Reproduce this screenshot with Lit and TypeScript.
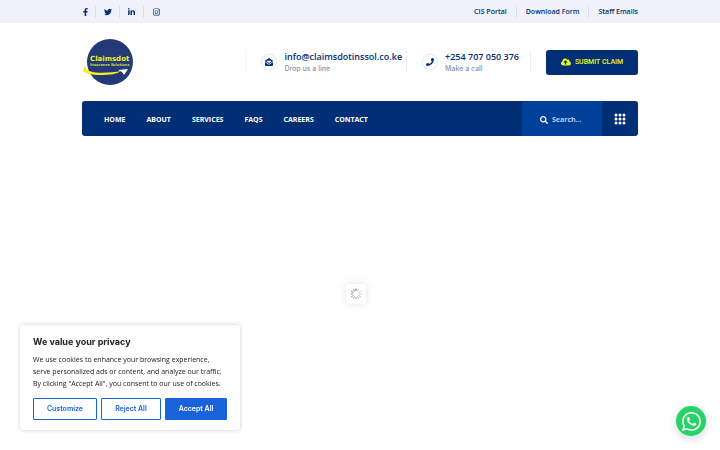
import { LitElement, html, svg, css } from "lit";
import { customElement } from "lit/decorators.js";

const icon = (box: string, path: string, cls = "") =>
  html`<svg class="icon ${cls}" viewBox=${box} aria-hidden="true">${svg`<path fill="currentColor" d=${path} />`}</svg>`;

const SOCIALS = [
  { name: "Facebook", box: "0 0 320 512", d: "M279.14 288l14.22-92.66h-88.91v-60.13c0-25.35 12.42-50.06 52.24-50.06h40.42V6.26S260.43 0 225.36 0c-73.22 0-121.08 44.38-121.08 124.72v70.62H22.89V288h81.39v224h100.17V288z" },
  { name: "Twitter", box: "0 0 512 512", d: "M459.37 151.716c.325 4.548.325 9.097.325 13.645 0 138.72-105.583 298.558-298.558 298.558-59.452 0-114.68-17.219-161.137-47.106 8.447.974 16.568 1.299 25.34 1.299 49.055 0 94.213-16.568 130.274-44.832-46.132-.975-84.792-31.188-98.112-72.772 6.498.974 12.995 1.624 19.818 1.624 9.421 0 18.843-1.3 27.614-3.573-48.081-9.747-84.143-51.98-84.143-102.985v-1.299c13.969 7.797 30.214 12.67 47.431 13.319-28.264-18.843-46.781-51.005-46.781-87.391 0-19.492 5.197-37.36 14.294-52.954 51.655 63.675 129.3 105.258 216.365 109.807-1.624-7.797-2.599-15.918-2.599-24.04 0-57.828 46.782-104.934 104.934-104.934 30.213 0 57.502 12.67 76.67 33.137 23.715-4.548 46.456-13.32 66.599-25.34-7.798 24.366-24.366 44.833-46.132 57.827 21.117-2.273 41.584-8.122 60.426-16.243-14.292 20.791-32.161 39.308-52.628 54.253z" },
  { name: "LinkedIn", box: "0 0 448 512", d: "M100.28 448H7.4V148.9h92.88zM53.79 108.1C24.09 108.1 0 83.5 0 53.8a53.79 53.79 0 0 1 107.58 0c0 29.7-24.1 54.3-53.79 54.3zM447.9 448h-92.68V302.4c0-34.7-.7-79.2-48.29-79.2-48.29 0-55.69 37.7-55.69 76.7V448h-92.78V148.9h89.08v40.8h1.3c12.4-23.5 42.69-48.3 87.88-48.3 94 0 111.28 61.9 111.28 142.3V448z" },
  { name: "Instagram", box: "0 0 448 512", d: "M224.1 141c-63.6 0-114.9 51.3-114.9 114.9s51.3 114.9 114.9 114.9S339 319.5 339 255.9 287.7 141 224.1 141zm0 189.6c-41.1 0-74.7-33.5-74.7-74.7s33.5-74.7 74.7-74.7 74.7 33.5 74.7 74.7-33.6 74.7-74.7 74.7zm146.4-194.3c0 14.9-12 26.8-26.8 26.8-14.9 0-26.8-12-26.8-26.8s12-26.8 26.8-26.8 26.8 12 26.8 26.8zm76.1 27.2c-1.7-35.9-9.9-67.7-36.2-93.9-26.2-26.2-58-34.4-93.9-36.2-37-2.1-147.9-2.1-184.9 0-35.8 1.7-67.6 9.9-93.9 36.1s-34.4 58-36.2 93.9c-2.1 37-2.1 147.9 0 184.9 1.7 35.9 9.9 67.7 36.2 93.9s58 34.4 93.9 36.2c37 2.1 147.9 2.1 184.9 0 35.9-1.7 67.7-9.9 93.9-36.2 26.2-26.2 34.4-58 36.2-93.9 2.1-37 2.1-147.8 0-184.8zM398.8 388c-7.8 19.6-22.9 34.7-42.6 42.6-29.5 11.7-99.5 9-132.1 9s-102.7 2.6-132.1-9c-19.6-7.8-34.7-22.9-42.6-42.6-11.7-29.5-9-99.5-9-132.1s-2.6-102.7 9-132.1c7.8-19.6 22.9-34.7 42.6-42.6 29.5-11.7 99.5-9 132.1-9s102.7-2.6 132.1 9c19.6 7.8 34.7 22.9 42.6 42.6 11.7 29.5 9 99.5 9 132.1s2.7 102.7-9 132.1z" },
];
const PHONE = "M493.4 24.6l-104-24c-11.3-2.6-22.9 3.3-27.5 13.9l-48 112c-4.2 9.8-1.4 21.3 6.9 28l60.6 49.6c-36 76.7-98.9 140.5-177.2 177.2l-49.6-60.6c-6.8-8.3-18.2-11.1-28-6.9l-112 48C3.9 366.5-2 378.1.6 389.4l24 104C27.1 504.2 36.7 512 48 512c256.1 0 464-207.5 464-464 0-11.2-7.7-20.9-18.6-23.4z";
const MAIL = "M256 0Q280 0 310 26L490 166Q512 184 512 204L310 356Q256 392 202 356L0 204Q0 184 22 166L202 26Q232 0 256 0ZM120 170V226L256 322L392 226V170ZM0 250L190 392Q256 434 322 392L512 250V464Q512 512 464 512H48Q0 512 0 464Z";
const SEARCH = "M505 442.7L405.3 343c-4.5-4.5-10.6-7-17-7H372c27.6-35.3 44-79.7 44-128C416 93.1 322.9 0 208 0S0 93.1 0 208s93.1 208 208 208c48.3 0 92.7-16.4 128-44v16.3c0 6.4 2.5 12.5 7 17l99.7 99.7c9.4 9.4 24.6 9.4 33.9 0l28.3-28.3c9.4-9.4 9.4-24.6.1-34zM208 336c-70.7 0-128-57.2-128-128 0-70.7 57.2-128 128-128 70.7 0 128 57.2 128 128 0 70.7-57.2 128-128 128z";
const CLOUD = "M537.6 226.6c4.1-10.7 6.4-22.4 6.4-34.6 0-53-43-96-96-96-19.7 0-38.1 6-53.3 16.2C367 64.2 315.3 32 256 32c-88.4 0-160 71.6-160 160 0 2.7.1 5.4.2 8.1C40.2 219.8 0 273.2 0 336c0 79.5 64.5 144 144 144h368c70.7 0 128-57.3 128-128 0-61.9-44-113.6-102.4-125.4zM393.4 288H328v112c0 8.8-7.2 16-16 16h-48c-8.8 0-16-7.2-16-16V288h-65.4c-14.3 0-21.4-17.2-11.3-27.3l105.4-105.4c6.2-6.2 16.4-6.2 22.6 0l105.4 105.4c10.1 10.1 2.9 27.3-11.3 27.3z";
const WHATSAPP = "M380.9 97.1C339 55.1 283.2 32 223.9 32c-122.4 0-222 99.6-222 222 0 39.1 10.2 77.3 29.6 111L0 480l117.7-30.9c32.4 17.7 68.9 27 106.1 27h.1c122.3 0 224.1-99.6 224.1-222 0-59.3-25.2-115-67.1-157zm-157 341.6c-33.2 0-65.7-8.9-94-25.7l-6.7-4-69.8 18.3L72 359.2l-4.4-7c-18.5-29.4-28.2-63.3-28.2-98.2 0-101.7 82.8-184.5 184.6-184.5 49.3 0 95.6 19.2 130.4 54.1 34.8 34.9 56.2 81.2 56.1 130.5 0 101.8-84.9 184.6-186.6 184.6zm101.2-138.2c-5.5-2.8-32.8-16.2-37.9-18-5.1-1.9-8.8-2.8-12.5 2.8-3.7 5.6-14.3 18-17.6 21.8-3.2 3.7-6.5 4.2-12 1.4-32.6-16.3-54-29.1-75.5-66-5.7-9.8 5.7-9.1 16.3-30.3 1.8-3.7.9-6.9-.5-9.7-1.4-2.8-12.5-30.1-17.1-41.2-4.5-10.8-9.1-9.3-12.5-9.5-3.2-.2-6.9-.2-10.6-.2-3.7 0-9.7 1.4-14.8 6.9-5.1 5.6-19.4 19-19.4 46.3 0 27.3 19.9 53.7 22.6 57.4 2.8 3.7 39.1 59.7 94.8 83.8 35.2 15.2 49 16.5 66.6 13.9 10.7-1.6 32.8-13.4 37.4-26.4 4.6-13 4.6-24.1 3.2-26.4-1.3-2.5-5-3.9-10.5-6.6z";
const DOTS = [2, 6, 10].flatMap((y) => [2, 6, 10].map((x) => ({ x, y })));

@customElement("app-root")
export class AppRoot extends LitElement {
  static styles = css`
    :host { display: block; min-height: 100vh; background: #fff; color: #002f75; font: 600 7px/12px "Open Sans", "Noto Sans", sans-serif; }
    * { box-sizing: border-box; }
    a { color: inherit; text-decoration: none; }
    button, input { font: inherit; margin: 0; }
    button { cursor: pointer; padding: 0; }
    .icon { display: block; height: 8px; width: auto; flex: none; }
    .wrap { max-width: 556px; margin: 0 auto; }
    .topbar { background: #eff3f9; }
    .topbar .wrap { display: flex; justify-content: space-between; align-items: center; height: 23px; }
    .socials, .links { display: flex; align-items: center; }
    .socials a { display: flex; align-items: center; justify-content: center; width: 24px; height: 12px; border-right: 1px solid #d9e0ec; }
    .socials a:first-child { width: 14px; padding-left: 1px; justify-content: flex-start; }
    .socials a:last-child, .links a:last-child { border: 0; }
    .links a { padding: 0 9px; border-right: 1px solid #d9e0ec; }
    .links a:last-child { padding-right: 0; }
    .header { display: flex; align-items: center; justify-content: space-between; height: 78px; }
    .logo svg { display: block; width: 52px; height: 48px; }
    .logo-name { font: 700 7px "DejaVu Sans", sans-serif; fill: #f5ee22; }
    .logo-sub { font: 700 4px "Open Sans", sans-serif; fill: #d8dc4a; }
    .contacts { display: flex; align-items: center; }
    .contact { display: flex; align-items: center; gap: 7px; height: 22px; padding: 0 4px 0 15px; border-right: 1px solid #edf0f5; }
    .contact:first-child { border-left: 1px solid #f4f6f9; }
    .contact.call { padding-right: 11px; }
    .round { display: grid; place-items: center; width: 16px; height: 16px; border: 1px solid #e6ebf4; border-radius: 50%; box-shadow: 0 0 2px #e6ebf4; }
    .lines { padding-top: 2px; }
    .contact strong { display: block; font-size: 9px; line-height: 12px; font-weight: 600; }
    .contact small { display: block; font: 500 7px/12px Inter, sans-serif; color: #8796b0; }
    .submit { display: flex; align-items: center; justify-content: center; gap: 4px; width: 92px; height: 25px; margin-left: 15px; border: 0; border-radius: 3px; background: #002f75; color: #f0f51c; font: 500 7px/12px Roboto, sans-serif; }
    .nav { display: flex; height: 35px; background: #002f75; border-radius: 3px; color: #fff; overflow: hidden; }
    .menu { display: flex; align-items: center; gap: 21px; padding: 2px 0 0 22px; flex: 1; font-weight: 700; }
    .search { display: flex; align-items: center; gap: 4px; width: 80px; padding: 3px 0 0 18px; background: #00409b; }
    .search input { width: 44px; padding: 0; border: 0; outline: 0; background: none; color: #fff; font-weight: 700; }
    .search input::placeholder { color: #b9cdec; opacity: 1; }
    .grid { display: grid; place-items: center; width: 36px; border: 0; background: none; color: #fff; }
    .grid svg { width: 12px; height: 12px; }
    .loader { position: fixed; left: calc(50% - 14px); top: calc(50% + 59px); display: grid; place-items: center; width: 20px; height: 20px; border-radius: 2px; background: #fff; box-shadow: 0 0 8px #e2e2e2; }
    .loader svg { width: 12px; height: 12px; }
    .consent { position: fixed; left: 20px; bottom: 20px; width: 220px; padding: 11px 13px 10px; background: #fff; border-radius: 3px; box-shadow: 0 0 4px #ccc; color: #212121; font: 400 7px/12px "Open Sans", sans-serif; }
    .consent h2 { margin: 0 0 6px; font: 700 9px/12px Inter, sans-serif; }
    .consent p { margin: 0; white-space: nowrap; }
    .actions { display: flex; gap: 4px; margin-top: 8px; }
    .actions button { flex: 64 1 0; height: 22px; border: 1px solid #1863dc; border-radius: 1px; background: #fff; color: #1863dc; font: 600 7px/12px Inter, sans-serif; }
    .actions .reject { flex-grow: 60; }
    .actions .accept { flex-grow: 62; background: #1863dc; color: #fff; }
    .chat { position: fixed; right: 14px; bottom: 14px; display: grid; place-items: center; width: 30px; height: 30px; border-radius: 50%; background: #25d366; color: #fff; box-shadow: 0 3px 8px #d2dbe0; }
    .chat .icon { height: 19px; }
  `;

  render() {
    return html`
      <div class="topbar"><div class="wrap">
        <nav class="socials" aria-label="Social">${SOCIALS.map((s) => html`<a href="#" aria-label=${s.name}>${icon(s.box, s.d)}</a>`)}</nav>
        <nav class="links" aria-label="Staff and clients">${["CIS Portal", "Download Form", "Staff Emails"].map((t) => html`<a href="#">${t}</a>`)}</nav>
      </div></div>
      <div class="wrap">
        <header class="header">
          <a class="logo" href="#" aria-label="Home">
            <svg viewBox="0 0 52 48">
              <circle cx="28" cy="24" r="23" fill="#233a76" />
              <text class="logo-name" x="8" y="23">Claimsdot</text>
              <text class="logo-sub" x="8" y="28">Insurance Solutions</text>
              <path d="M4 28C-4 34 6 37 18 37C28 37 35 36 39 33C28 35 2 37 4 28Z" fill="#f5ee22" />
              <path d="M36 32L46 31L42 37L40 34Z" fill="#fff" />
            </svg>
          </a>
          <div class="contacts">
            <a class="contact" href="mailto:info@claimsdotinssol.co.ke"><span class="round">${icon("0 0 512 512", MAIL)}</span><span class="lines"><strong>info@claimsdotinssol.co.ke</strong><small>Drop us a line</small></span></a>
            <a class="contact call" href="tel:+254707050376"><span class="round">${icon("0 0 512 512", PHONE)}</span><span class="lines"><strong>+254 707 050 376</strong><small>Make a call</small></span></a>
            <button class="submit">${icon("0 0 640 512", CLOUD)}SUBMIT CLAIM</button>
          </div>
        </header>
        <div class="nav">
          <nav class="menu" aria-label="Main">${["HOME", "ABOUT", "SERVICES", "FAQS", "CAREERS", "CONTACT"].map((t) => html`<a href="#">${t}</a>`)}</nav>
          <label class="search">${icon("0 0 512 512", SEARCH)}<input type="search" aria-label="Search" placeholder="Search..." /></label>
          <button class="grid" aria-label="More"><svg viewBox="0 0 12 12" aria-hidden="true">${DOTS.map((p) => svg`<circle cx=${p.x} cy=${p.y} r="1.5" fill="currentColor" />`)}</svg></button>
        </div>
      </div>
      <div class="loader" role="status" aria-label="Loading"><svg viewBox="-6 -6 12 12">
        ${Array.from({ length: 12 }, (_, i) => svg`<path d="M0 -3V-5.5" stroke="#333" stroke-width=".8" stroke-opacity=${i === 0 ? 1 : 0.2 + i * 0.05} transform="rotate(${i * 30})" />`)}
      </svg></div>
      <section class="consent" aria-label="Cookie consent">
        <h2>We value your privacy</h2>
        <p>We use cookies to enhance your browsing experience,<br />serve personalized ads or content, and analyze our traffic.<br />By clicking "Accept All", you consent to our use of cookies.</p>
        <div class="actions"><button>Customize</button><button class="reject">Reject All</button><button class="accept">Accept All</button></div>
      </section>
      <a class="chat" href="#" aria-label="WhatsApp">${icon("0 32 448 448", WHATSAPP)}</a>
    `;
  }
}
